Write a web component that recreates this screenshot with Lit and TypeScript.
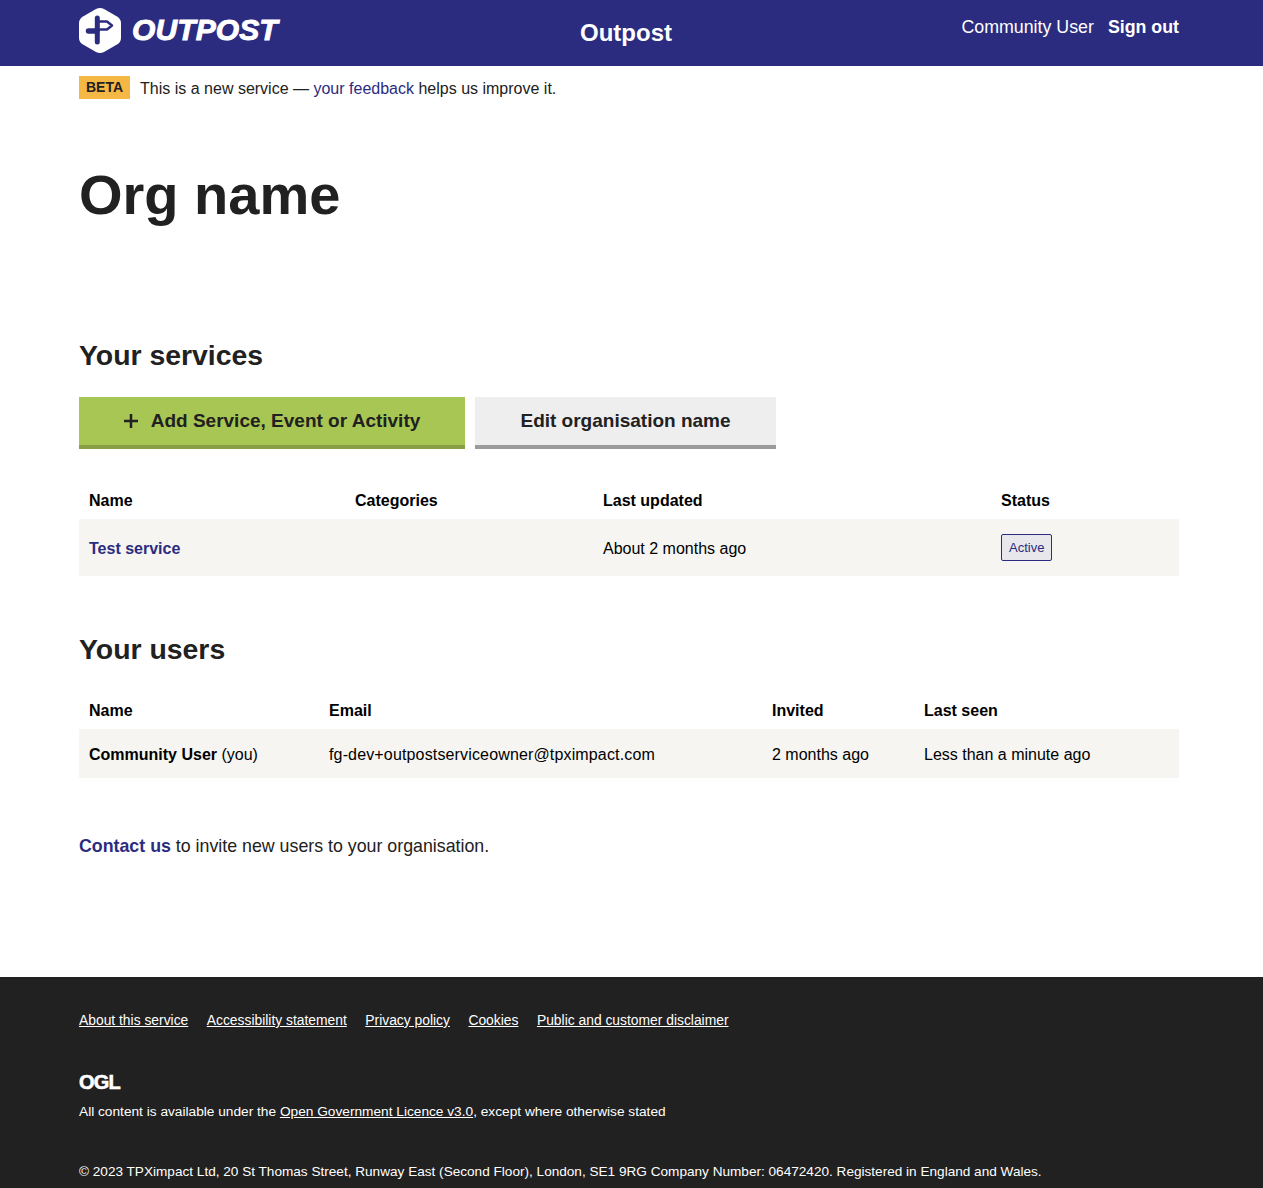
import { LitElement, html, css } from 'lit'
import { customElement } from 'lit/decorators.js'

@customElement('app-root')
export class AppRoot extends LitElement {
  static styles = css`
    :host {
      display: block;
      font-family: 'Liberation Sans', Arial, sans-serif;
      color: #212121;
      background: #fff;
    }

    a {
      color: #2b2c7f;
      text-decoration: none;
    }

    .wrap {
      width: 1100px;
      margin-left: 79px;
    }

    /* Header */
    .header {
      background: #2b2c7f;
      height: 66px;
    }

    .header .wrap {
      display: grid;
      grid-template-columns: 1fr auto 1fr;
      height: 66px;
    }

    .brand {
      display: flex;
      align-items: flex-start;
      padding-top: 8px;
      gap: 11px;
    }

    .brand svg {
      width: 42px;
      height: 45px;
      flex: none;
    }

    .brand-name {
      color: #fff;
      font-size: 30px;
      line-height: 44px;
      font-weight: 700;
      font-style: italic;
      letter-spacing: 0.1px;
      -webkit-text-stroke: 0.9px #fff;
    }

    .service-name {
      color: #fff;
      font-size: 24px;
      font-weight: 700;
      line-height: 66px;
      padding-right: 6px;
    }

    .user-nav {
      display: flex;
      justify-content: flex-end;
      gap: 14px;
      color: #fff;
      font-size: 17.8px;
      line-height: 54px;
    }

    .user-nav a {
      color: #fff;
      font-weight: 700;
    }

    /* Beta banner */
    .beta {
      display: flex;
      align-items: flex-start;
      gap: 10px;
      height: 44px;
      padding-top: 10px;
      box-sizing: border-box;
      font-size: 16px;
      line-height: 24px;
    }

    .beta-text {
      padding-top: 1px;
    }

    .tag {
      background: #f6b845;
      font-weight: 700;
      font-size: 14px;
      line-height: 23px;
      padding: 0 7px;
    }

    /* Main */
    h1 {
      margin: 0;
      padding: 46px 0 0;
      font-size: 56px;
      line-height: 78px;
      font-weight: 700;
    }

    h2 {
      margin: 0;
      font-size: 28.4px;
      line-height: 36px;
      font-weight: 700;
    }

    .services {
      margin-top: 103px;
    }

    .actions {
      display: flex;
      gap: 10px;
      margin-top: 24px;
    }

    .btn {
      display: flex;
      align-items: center;
      justify-content: center;
      height: 52px;
      font-family: inherit;
      font-size: 19px;
      font-weight: 700;
      color: #212121;
      border: 0;
      padding: 0;
    }

    .btn-primary {
      width: 386px;
      background: #a8c653;
      border-bottom: 4px solid #8a9f45;
      gap: 13px;
    }

    .btn-primary svg {
      width: 14px;
      height: 14px;
    }

    .btn-secondary {
      width: 301px;
      background: #eeeeee;
      border-bottom: 4px solid #9b9b9b;
    }

    table {
      width: 100%;
      border-collapse: collapse;
      table-layout: fixed;
      font-size: 16px;
      color: #000;
    }

    th,
    td {
      box-sizing: border-box;
    }

    th {
      text-align: left;
      font-weight: 700;
      padding: 2px 10px 0;
    }

    td {
      padding: 2px 10px 0;
      background: #f6f5f1;
    }

    td.status-cell {
      padding-top: 0;
    }

    .services table {
      margin-top: 32px;
    }

    .services th {
      height: 38px;
    }

    .services td {
      height: 57px;
    }

    .service-link {
      font-weight: 700;
    }

    .status {
      display: inline-block;
      vertical-align: middle;
      box-sizing: border-box;
      height: 27px;
      line-height: 25px;
      padding: 0 7px;
      font-size: 13px;
      color: #2b2c7f;
      background: #e7e7ec;
      border: 1px solid #2b2c7f;
      border-radius: 2px;
    }

    .users {
      margin-top: 55px;
    }

    .users table {
      margin-top: 24px;
    }

    .users th {
      height: 38px;
    }

    .users td {
      height: 49px;
    }

    .email {
      letter-spacing: 0.15px;
    }

    .contact {
      margin: 56px 0 0;
      font-size: 17.8px;
      line-height: 24px;
      padding-bottom: 119px;
    }

    .contact a {
      font-weight: 700;
    }

    /* Footer */
    .footer {
      background: #212121;
      color: #fff;
      font-size: 13.6px;
      height: 211px;
      overflow: hidden;
    }

    .footer a {
      color: #fff;
      text-decoration: underline;
    }

    .footer-links {
      display: flex;
      gap: 18.5px;
      padding-top: 35px;
      font-size: 13.85px;
      line-height: 17px;
    }

    .ogl {
      margin-top: 42px;
      font-size: 20px;
      font-weight: 700;
      line-height: 22px;
      letter-spacing: -0.8px;
      -webkit-text-stroke: 0.6px #fff;
    }

    .licence {
      margin-top: 10px;
      font-size: 13.7px;
      line-height: 17px;
    }

    .company {
      margin-top: 43px;
      line-height: 17px;
    }
  `

  render() {
    return html`
      <header class="header">
        <div class="wrap">
          <div class="brand">
            <svg viewBox="0 0 42 45" aria-hidden="true">
              <path
                fill="#fff"
                d="M21 0 Q23 0 25 1 L38 8.500 Q42 11 42 15 V30 Q42 34 38 36.500 L25 44 Q21 46 17 44 L4 36.500 Q0 34 0 30 V15 Q0 11 4 8.500 L17 1 Q19 0 21 0 Z"
              />
              <g fill="none" stroke="#2b2c7f" stroke-linecap="round" stroke-linejoin="round">
                <path stroke-width="5" d="M18.300 10 V34" />
                <path stroke-width="5.500" d="M9.500 23 H18" />
                <path stroke-width="2.500" d="M18.300 13.500 H28 L33 17.500 L28 21.500 H18.300" />
              </g>
            </svg>
            <span class="brand-name">OUTPOST</span>
          </div>
          <div class="service-name">Outpost</div>
          <div class="user-nav">
            <span>Community User</span>
            <a href="#">Sign out</a>
          </div>
        </div>
      </header>

      <div class="wrap">
        <div class="beta">
          <span class="tag">BETA</span>
          <span class="beta-text">This is a new service — <a href="#">your feedback</a> helps us improve it.</span>
        </div>

        <h1>Org name</h1>

        <section class="services">
          <h2>Your services</h2>
          <div class="actions">
            <button class="btn btn-primary">
              <svg viewBox="0 0 14 14" aria-hidden="true">
                <path fill="#212121" d="M5.750 0h2.500v5.750H14v2.500H8.250V14h-2.500V8.250H0v-2.500h5.750z" />
              </svg>
              Add Service, Event or Activity
            </button>
            <button class="btn btn-secondary">Edit organisation name</button>
          </div>
          <table>
            <colgroup>
              <col style="width: 266px" />
              <col style="width: 248px" />
              <col style="width: 398px" />
              <col />
            </colgroup>
            <thead>
              <tr>
                <th>Name</th>
                <th>Categories</th>
                <th>Last updated</th>
                <th>Status</th>
              </tr>
            </thead>
            <tbody>
              <tr>
                <td><a class="service-link" href="#">Test service</a></td>
                <td></td>
                <td>About 2 months ago</td>
                <td class="status-cell"><span class="status">Active</span></td>
              </tr>
            </tbody>
          </table>
        </section>

        <section class="users">
          <h2>Your users</h2>
          <table>
            <colgroup>
              <col style="width: 240px" />
              <col style="width: 443px" />
              <col style="width: 152px" />
              <col />
            </colgroup>
            <thead>
              <tr>
                <th>Name</th>
                <th>Email</th>
                <th>Invited</th>
                <th>Last seen</th>
              </tr>
            </thead>
            <tbody>
              <tr>
                <td><strong>Community User</strong> (you)</td>
                <td class="email">fg-dev+outpostserviceowner@tpximpact.com</td>
                <td>2 months ago</td>
                <td>Less than a minute ago</td>
              </tr>
            </tbody>
          </table>
        </section>

        <p class="contact"><a href="#">Contact us</a> to invite new users to your organisation.</p>
      </div>

      <footer class="footer">
        <div class="wrap">
          <div class="footer-links">
            <a href="#">About this service</a>
            <a href="#">Accessibility statement</a>
            <a href="#">Privacy policy</a>
            <a href="#">Cookies</a>
            <a href="#">Public and customer disclaimer</a>
          </div>
          <div class="ogl">OGL</div>
          <div class="licence">
            All content is available under the <a href="#">Open Government Licence v3.0</a>, except
            where otherwise stated
          </div>
          <div class="company">
            © 2023 TPXimpact Ltd, 20 St Thomas Street, Runway East (Second Floor), London, SE1 9RG
            Company Number: 06472420. Registered in England and Wales.
          </div>
        </div>
      </footer>
    `
  }
}
